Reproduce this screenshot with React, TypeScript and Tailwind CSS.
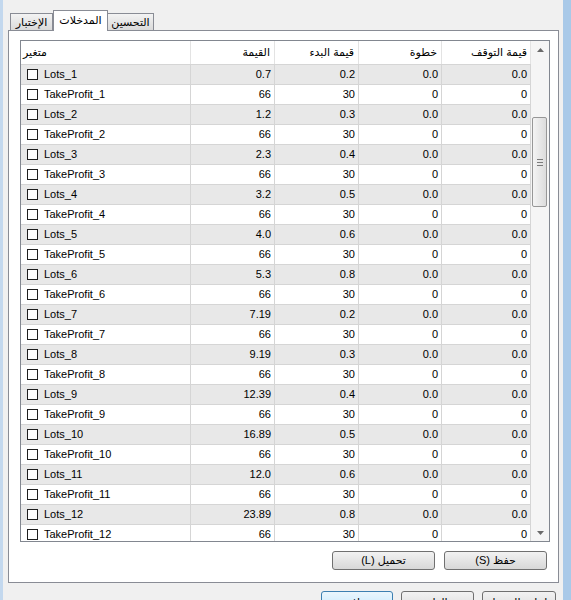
import React from "react";

type Row = { name: string; value: string; start: string; step: string; stop: string };

const lots = ["0.7", "1.2", "2.3", "3.2", "4.0", "5.3", "7.19", "9.19", "12.39", "16.89", "12.0", "23.89"];
const lotStarts = ["0.2", "0.3", "0.4", "0.5", "0.6", "0.8", "0.2", "0.3", "0.4", "0.5", "0.6", "0.8"];

const rows: Row[] = lots.flatMap((v, i) => [
  { name: `Lots_${i + 1}`, value: v, start: lotStarts[i], step: "0.0", stop: "0.0" },
  { name: `TakeProfit_${i + 1}`, value: "66", start: "30", step: "0", stop: "0" },
]);

function Checkbox() {
  return <span className="w-[11px] h-[11px] border border-[#1e1e1e] bg-white shrink-0" />;
}

function Triangle({ up }: { up?: boolean }) {
  return (
    <svg width="7" height="4" viewBox="0 0 7 4">
      <path d={up ? "M0 4 L3.5 0 L7 4 Z" : "M0 0 L3.5 4 L7 0 Z"} fill="#6a6a6a" />
    </svg>
  );
}

function Scrollbar() {
  return (
    <div className="w-[18px] flex flex-col bg-[#f5f5f5]">
      <div className="h-[17px] shrink-0 flex items-center justify-center">
        <Triangle up />
      </div>
      <div className="h-[59px] shrink-0" />
      <div className="shrink-0 ml-px w-[15px] h-[90px] rounded-[2px] border border-[#979797] bg-linear-to-r from-[#f4f4f4] to-[#dcdcdc] flex flex-col items-center justify-center gap-[2px]">
        <span className="w-[6px] h-px bg-[#7b7b7b]" />
        <span className="w-[6px] h-px bg-[#7b7b7b]" />
        <span className="w-[6px] h-px bg-[#7b7b7b]" />
      </div>
      <div className="flex-1" />
      <div className="h-[17px] shrink-0 flex items-center justify-center">
        <Triangle />
      </div>
    </div>
  );
}

const cols = "grid grid-cols-[170px_84px_84px_83px_89px]";
const btn =
  "rounded-[3px] border border-[#707070] bg-linear-to-b from-[#f2f2f2] to-[#d8d8d8] flex items-center justify-center";

export default function App() {
  return (
    <div className="w-[571px] h-[600px] overflow-hidden flex bg-[#f0f0f0] text-[11px] text-black font-['Liberation_Sans','DejaVu_Sans',sans-serif]">
      <div className="w-[3px] bg-[#c3d8ee]" />
      <div className="flex-1 flex flex-col pl-[5px] pr-[4px]">
        {/* tabs */}
        <div className="relative z-10 shrink-0 flex items-end h-[31px] pl-[2px]">
          <div className="w-[43px] h-[17px] mb-px border border-b-0 border-[#898c95] bg-linear-to-b from-[#f3f3f3] to-[#dadada] flex items-center justify-center">
            الإختبار
          </div>
          <div className="w-[55px] h-[21px] border border-b-0 border-[#898c95] bg-white flex items-center justify-center pb-[2px]">
            المدخلات
          </div>
          <div className="w-[46px] h-[17px] mb-px border border-b-0 border-l-0 border-[#898c95] bg-linear-to-b from-[#f3f3f3] to-[#dadada] flex items-center justify-center">
            التحسين
          </div>
        </div>

        {/* panel */}
        <div className="-mt-px shrink-0 h-[553px] border border-[#898c95] bg-white flex flex-col pl-[11px] pr-[8px] pt-[9px]">
          <div className="shrink-0 w-[530px] h-[502px] border border-[#828790] flex">
            <div className="w-[510px] overflow-hidden">
              <div className={`${cols} h-[24px] border-b border-[#d5d5d5] bg-white`}>
                <div className="border-r border-[#e3e3e3] flex items-center pl-[2px]">متغير</div>
                <div className="border-r border-[#e3e3e3] flex items-center justify-end pr-[4px]">القيمة</div>
                <div className="border-r border-[#e3e3e3] flex items-center justify-end pr-[4px]">قيمة البدء</div>
                <div className="border-r border-[#e3e3e3] flex items-center justify-end pr-[4px]">خطوة</div>
                <div className="border-r border-[#e3e3e3] flex items-center justify-end pr-[3px]">قيمة التوقف</div>
              </div>
              {rows.map((r, i) => (
                <div
                  key={r.name}
                  className={`${cols} h-[20px] ${i % 2 === 0 ? "bg-[#e8e8e8]" : "bg-white"}`}
                >
                  <div className="border-r border-b border-[#d5d5d5] flex items-center pl-[6px] gap-[6px]">
                    <Checkbox />
                    <span>{r.name}</span>
                  </div>
                  <div className="border-r border-b border-[#d5d5d5] flex items-center justify-end pr-[3px]">{r.value}</div>
                  <div className="border-r border-b border-[#d5d5d5] flex items-center justify-end pr-[3px]">{r.start}</div>
                  <div className="border-r border-b border-[#d5d5d5] flex items-center justify-end pr-[3px]">{r.step}</div>
                  <div className="border-r border-b border-[#d5d5d5] flex items-center justify-end pr-[3px]">{r.stop}</div>
                </div>
              ))}
            </div>
            <Scrollbar />
          </div>

          <div className="shrink-0 mt-[9px] mr-[3px] flex justify-end gap-[9px]">
            <button className={`w-[103px] h-[19px] ${btn}`} dir="rtl">
              تحميل (L)
            </button>
            <button className={`w-[103px] h-[19px] ${btn}`} dir="rtl">
              حفظ (S)
            </button>
          </div>
        </div>

        {/* dialog buttons */}
        <div className="shrink-0 mt-[8px] pr-[3px] flex justify-end gap-[8px]">
          <button className="w-[72px] h-[23px] rounded-[3px] border border-[#3c7fb1] bg-linear-to-b from-[#eaf6fd] to-[#bee6fd] flex items-center justify-center">
            موافق
          </button>
          <button className={`w-[73px] h-[23px] ${btn}`}>إلغاء</button>
          <button className={`w-[74px] h-[23px] ${btn}`}>إعادة الضبط</button>
        </div>
      </div>
      <div className="w-[8px] bg-[#a9c9e8]" />
    </div>
  );
}
